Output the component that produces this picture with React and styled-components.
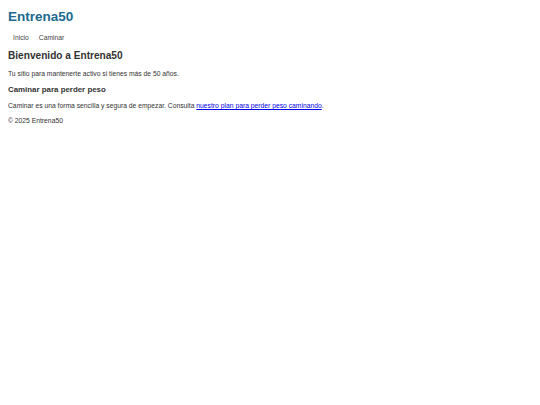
import React from "react";
import styled, { createGlobalStyle } from "styled-components";

const Global = createGlobalStyle`
  html, body { background: #fff; }
  body {
    margin: 8px;
    font-family: "Liberation Sans", Arial, sans-serif;
    font-size: 6.75px;
    color: #333;
  }
`;

const Header = styled.header`
  display: flex;
  flex-direction: column;
  padding-top: 1px;
`;

const Title = styled.h1`
  margin: 0 0 10px;
  font-size: 13.5px;
  font-weight: bold;
  color: #1b6a8f;
`;

const Nav = styled.nav`
  display: flex;
  padding-bottom: 1px;
`;

const NavLink = styled.a`
  padding: 0 5px;
  color: #444;
  text-decoration: none;
`;

const Heading2 = styled.h2`
  margin: 8.4px 0;
  font-size: 10.125px;
  color: #333;
`;

const Heading3 = styled.h3`
  margin: 7.9px 0;
  font-size: 7.9px;
  color: #333;
`;

const Text = styled.p`
  margin: 6.75px 0;
`;

const Link = styled.a`
  color: #0000ee;
  text-decoration: underline;
  text-decoration-skip-ink: none;
`;

const Footer = styled.footer`
  margin-top: 8px;
`;

export default function App() {
  return (
    <>
      <Global />
      <Header>
        <Title>Entrena50</Title>
        <Nav>
          <NavLink href="#">Inicio</NavLink>
          <NavLink href="#">Caminar</NavLink>
        </Nav>
      </Header>
      <main>
        <section>
          <Heading2>Bienvenido a Entrena50</Heading2>
          <Text>Tu sitio para mantenerte activo si tienes más de 50 años.</Text>
        </section>
        <section>
          <Heading3>Caminar para perder peso</Heading3>
          <Text>
            Caminar es una forma sencilla y segura de empezar. Consulta{" "}
            <Link href="#">nuestro plan para perder peso caminando</Link>.
          </Text>
        </section>
      </main>
      <Footer>
        <Text>© 2025 Entrena50</Text>
      </Footer>
    </>
  );
}
